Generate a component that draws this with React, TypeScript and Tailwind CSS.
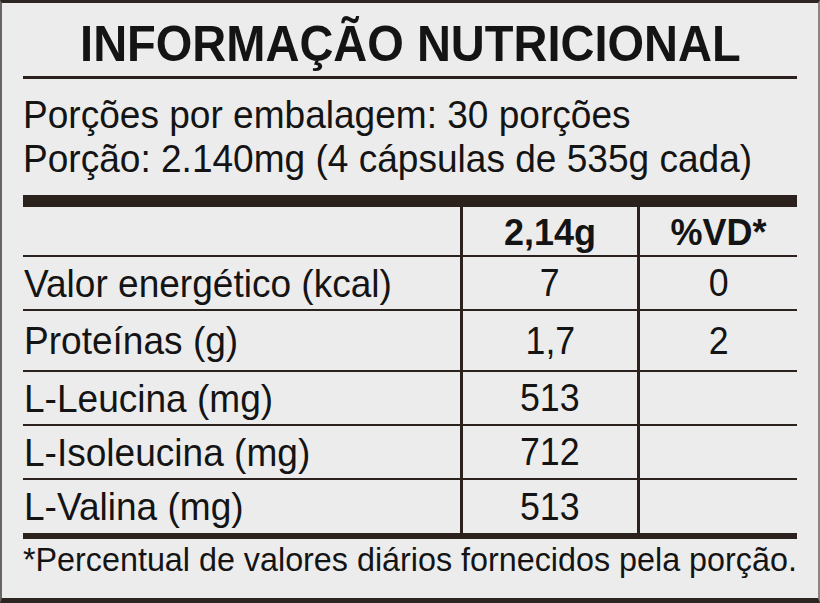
export default function App() {
  const rows = [
    { label: 'Valor energético (kcal)', value: '7', vd: '0', h: 'h-[54px] border-b-2' },
    { label: 'Proteínas (g)', value: '1,7', vd: '2', h: 'h-[61px] border-b-2' },
    { label: 'L-Leucina (mg)', value: '513', vd: '', h: 'h-[54px] border-b-2' },
    { label: 'L-Isoleucina (mg)', value: '712', vd: '', h: 'h-[54px] border-b-2' },
    { label: 'L-Valina (mg)', value: '513', vd: '', h: 'h-[53px]' },
  ]

  return (
    <div className="w-[820px] h-[603px] bg-[#ececec] border-t-[3px] border-b-[5px] border-x-2 border-t-[#2d2522] border-b-[#2d2522] border-l-[#6a6462] border-r-[#8a8482] px-[21px] flex flex-col font-['Liberation_Sans',Arial,sans-serif] text-[#141414]">
      {/* titulo */}
      <div className="pt-[16px] h-[73px] text-center">
        <span className="inline-block text-[50px] leading-[50px] font-bold scale-x-[0.94] origin-center whitespace-nowrap">
          INFORMAÇÃO NUTRICIONAL
        </span>
      </div>
      <div className="h-[3px] bg-[#2b211d]" />

      <div className="pt-[14px] text-[39px] leading-[44px] whitespace-nowrap">
        <p className="scale-x-[0.95] origin-left">Porções por embalagem: 30 porções</p>
        <p className="scale-x-[0.95] origin-left">Porção: 2.140mg (4 cápsulas de 535g cada)</p>
      </div>

      <div className="mt-[14px] h-[12px] bg-[#2b211d]" />

      {/* tabela */}
      <div className="flex flex-col">
        <div className="flex h-[50px] border-b-2 border-[#2b211d]">
          <div className="w-[437px]" />
          <div className="w-[177px] border-l-[3px] border-[#2b211d] flex items-center justify-center pt-[3px] text-[36px] leading-[36px] font-bold">
            2,14g
          </div>
          <div className="flex-1 border-l-[3px] border-[#2b211d] flex items-center justify-center pt-[3px] text-[36px] leading-[36px] font-bold">
            %VD*
          </div>
        </div>
        {rows.map((r) => (
          <div key={r.label} className={`flex border-[#2b211d] ${r.h}`}>
            <div className="w-[437px] flex items-center pl-[1px] text-[39px] leading-[39px] whitespace-nowrap">
              <span className="scale-x-[0.95] origin-left">{r.label}</span>
            </div>
            <div className="w-[177px] border-l-[3px] border-[#2b211d] flex items-center justify-center text-[38px] leading-[38px]">
              <span className="scale-x-[0.94]">{r.value}</span>
            </div>
            <div className="flex-1 border-l-[3px] border-[#2b211d] flex items-center justify-center text-[38px] leading-[38px]">
              <span className="scale-x-[0.94]">{r.vd}</span>
            </div>
          </div>
        ))}
      </div>
      <div className="h-[6px] bg-[#2b211d]" />

      <div className="flex-1 pt-[3px] text-[34px] leading-[34px] whitespace-nowrap">
        <p className="scale-x-[0.95] origin-left">*Percentual de valores diários fornecidos pela porção.</p>
      </div>
    </div>
  )
}
